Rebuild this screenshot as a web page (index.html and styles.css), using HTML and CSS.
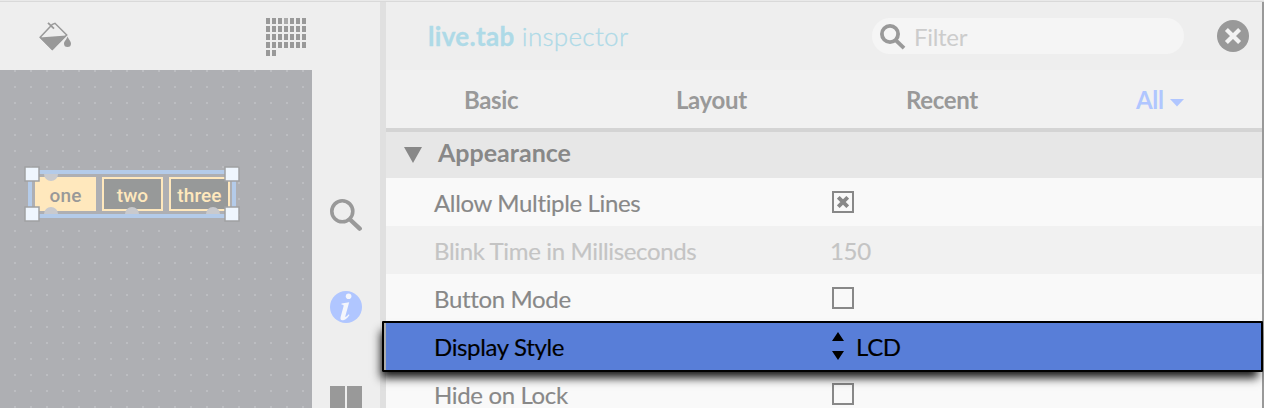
FILE: index.html
```html
<!DOCTYPE html>
<html lang="en">
<head>
<meta charset="utf-8">
<title>live.tab inspector</title>
<link rel="stylesheet" href="styles.css">
</head>
<body>
<div class="window">
  <div class="topline"></div>
  <div class="main">
    <section class="patcher">
      <div class="toolbar">
        <svg class="bucket" width="34" height="32" viewBox="0 0 34 32">
          <path d="M14.5 2.3 L2.2 15.2 L14.3 27.2 L28.7 13 L17 1.3 Z" fill="none" stroke="#999" stroke-width="1.5"/>
          <path d="M1.5 15.6 L28.5 13.4 L14.3 28.5 Z" fill="#999"/>
          <path d="M10 .8 L16 6.6" stroke="#999" stroke-width="1.8"/>
          <path d="M29.5 14.5 C31 18 33 19.2 33 21.6 A3.5 3.5 0 0 1 26 21.6 C26 19.2 28.4 18 29.5 14.5Z" fill="#999"/>
        </svg>
        <svg class="calendar" width="40" height="38" viewBox="0 0 40 38">
          <defs><pattern id="cells" width="6" height="8" patternUnits="userSpaceOnUse"><rect width="4" height="6" fill="#999"/></pattern></defs>
          <rect width="40" height="30" fill="url(#cells)"/>
          <rect y="32" width="10" height="6" fill="url(#cells)"/>
          <rect x="18" width="4" height="6" fill="#aaa"/>
        </svg>
      </div>
      <div class="canvas">
        <div class="widget">
          <div class="tab on">one</div>
          <div class="tab">two</div>
          <div class="tab">three</div>
          <svg class="marks" width="216" height="56" viewBox="0 0 216 56">
            <g fill="#c9cace"><path d="M20 8a7 7 0 0 0 14 0z"/><path d="M20 48a7 7 0 0 1 14 0zM101 48a7 7 0 0 1 14 0zM182 48a7 7 0 0 1 14 0z"/></g>
            <g fill="#eff6fe" stroke="#a0a1a3" stroke-width="1.5"><rect x="1" y="1" width="14" height="14"/><rect x="201" y="1" width="14" height="14"/><rect x="1" y="41" width="14" height="14"/><rect x="201" y="41" width="14" height="14"/></g>
          </svg>
        </div>
      </div>
    </section>
    <nav class="sidebar">
      <svg width="32" height="32" viewBox="0 0 32 32" fill="none" stroke="#999"><circle cx="12.3" cy="12.3" r="10.5" stroke-width="3.6"/><path d="M20 20.5 L29.7 29.6" stroke-width="4.4" stroke-linecap="round"/></svg>
      <svg class="info" width="32" height="32" viewBox="0 0 32 32"><circle cx="16" cy="16" r="16" fill="#b0c6ff"/><circle cx="18.6" cy="5.3" r="2.8" fill="#f4f6fc"/><path d="M11.6 12.6 L19.2 11.2 L15.3 25.2 C15 26.5 16.2 26.2 18.7 23.2 L19.5 24 C16.5 28.3 14.5 29.2 12.5 29.2 C10.3 29.2 10.2 27.6 10.7 25.7 L13.5 15.4 C13.9 14 13.5 13.7 11.4 13.6Z" fill="#f4f6fc"/></svg>
      <svg class="book" width="32" height="34" viewBox="0 0 32 34"><path d="M0 0h15v34H0zM17 0h15v34H17z" fill="#999"/></svg>
    </nav>
    <div class="divider"></div>
    <section class="inspector">
      <header class="head">
        <h1><b>live.tab</b> inspector</h1>
        <div class="filter">
          <svg width="27" height="27" viewBox="0 0 27 27" fill="none" stroke="#999" stroke-width="3.8"><circle cx="10" cy="10" r="8.1"/><path d="M15.5 16 L24 24.1"/></svg>
          <span>Filter</span>
        </div>
        <svg class="close" width="32" height="32" viewBox="0 0 32 32"><circle cx="16" cy="16" r="16" fill="#999"/><path d="M9.4 9.4 L22.6 22.6 M22.6 9.4 L9.4 22.6" stroke="#f3f3f3" stroke-width="4.2"/></svg>
      </header>
      <div class="tabs">
        <span class="t-basic">Basic</span><span class="t-layout">Layout</span><span class="t-recent">Recent</span><span class="t-all">All<svg width="14" height="8" viewBox="0 0 14 8"><path d="M0 0h14L7 7.5z" fill="#b0c6ff"/></svg></span>
      </div>
      <div class="group"><svg width="18" height="16" viewBox="0 0 18 16"><path d="M0 0h18L9 16z" fill="#888"/></svg><span>Appearance</span></div>
      <div class="row"><span class="name">Allow Multiple Lines</span><span class="box"><svg width="12" height="12" viewBox="0 0 12 12"><path d="M1.3 1.3 L10.7 10.7 M10.7 1.3 L1.3 10.7" stroke="#888" stroke-width="3.8"/></svg></span></div>
      <div class="row dim"><span class="name">Blink Time in Milliseconds</span><span class="num">150</span></div>
      <div class="row"><span class="name">Button Mode</span><span class="box"></span></div>
      <div class="row selected"><span class="name">Display Style</span><svg class="stepper" width="12" height="28" viewBox="0 0 12 28"><path d="M0 9L6 0l6 9zM0 19h12l-6 9z"/></svg><span class="value">LCD</span></div>
      <div class="row last"><span class="name">Hide on Lock</span><span class="box"></span></div>
    </section>
  </div>
</div>
</body>
</html>
```
FILE: styles.css
```css
* { box-sizing: border-box; }
body { margin: 0; font-family: Lato, "Liberation Sans", sans-serif; }
.window { width: 1264px; height: 408px; overflow: hidden; background: #eee; }
.topline { height: 2px; background: #e9e9e9; border-bottom: 1px solid #d9d9d9; }
.main { display: flex; height: 406px; }
.patcher { width: 312px; }
.toolbar { height: 68px; display: flex; justify-content: space-between; padding: 16px 6px 0 38px; }
.bucket { margin-top: 4px; }
.canvas { height: 338px; padding: 100px 0 0 28px; background: radial-gradient(circle at 15px 1px, #bcbdc1 1.2px, transparent 1.5px) 0 0 / 16px 16px #aeafb3; }
.widget { position: relative; width: 208px; height: 48px; border: 4px solid #b4cbe9; background: #aeafb3; padding: 3px 2px 3px 3px; display: flex; gap: 6px; }
.tab { flex: 1; border: 2px solid #ffe8bd; background: #979999; color: #ffe8bd; font-family: Roboto, sans-serif; font-size: 19px; font-weight: 500; letter-spacing: .1px; line-height: 33px; text-align: center; }
.tab.on { background: #ffe8bd; color: #999; }
.marks { position: absolute; left: -8px; top: -8px; }
.sidebar { width: 68px; display: flex; flex-direction: column; align-items: center; padding-top: 197px; }
.info { margin-top: 60px; }
.book { margin-top: 63px; }
.sidebar svg { flex: none; }
.divider { width: 6px; background: #e0e0e0; }
.inspector { width: 878px; border-right: 2px solid #999; }
.head { height: 68px; display: flex; padding-left: 42px; }
h1 { width: 444px; margin: 0; padding-top: 19px; font-size: 26px; line-height: 31px; font-weight: 300; letter-spacing: .3px; color: #aedae7; white-space: nowrap; -webkit-text-stroke: .3px #aedae7; }
h1 b { font-weight: 700; }
.filter { width: 312px; height: 36px; margin-top: 16px; border-radius: 18px; background: #f5f5f5; display: flex; padding: 6px 0 0 8px; }
.filter span { margin: -2px 0 0 7px; font-size: 24px; letter-spacing: -.3px; line-height: 30px; color: #ccc; }
.close { margin: 18px 0 0 33px; }
.tabs { height: 62px; display: flex; background: #f1f1f1; border-bottom: 4px solid #d4d4d4; color: #999; font-size: 24px; font-weight: 700; letter-spacing: -.35px; line-height: 59px; }
.t-basic { width: 290px; padding-left: 78px; }
.t-layout { width: 230px; }
.t-recent { width: 230px; }
.t-all { color: #b0c6ff; }
.t-all svg { margin: 0 0 2px 6px; }
.group { height: 46px; display: flex; align-items: center; background: #e7e7e7; color: #888; padding-left: 18px; font-size: 25px; font-weight: 700; line-height: 38px; }
.group span { margin-left: 16px; padding-bottom: 6px; }
.row { height: 48px; display: flex; background: #f9f9f9; color: #888; font-size: 24px; letter-spacing: -.35px; line-height: 49px; padding-left: 48px; -webkit-text-stroke: .15px currentColor; }
.name { width: 398px; white-space: nowrap; }
.dim { background: #f1f1f1; color: #c4c4c4; }
.num { margin-left: -2px; }
.box { width: 22px; height: 22px; margin-top: 13px; border: 2px solid #888; display: flex; align-items: center; justify-content: center; }
.selected { position: relative; z-index: 1; width: 881px; height: 51px; margin: -1px 0 -2px -4px; padding-left: 50px; border: 2px solid #000; background: linear-gradient(90deg, #adadad 2px, #587ed8 2px); color: #000; line-height: 48px; border-radius: 1px; box-shadow: -3px 8px 9px -2px rgba(0,0,0,.9); }
.last { height: 38px; }
.last .name { padding-top: 11px; line-height: 27px; }
.stepper { margin-top: 9px; }
.value { margin-left: 12px; }
```
